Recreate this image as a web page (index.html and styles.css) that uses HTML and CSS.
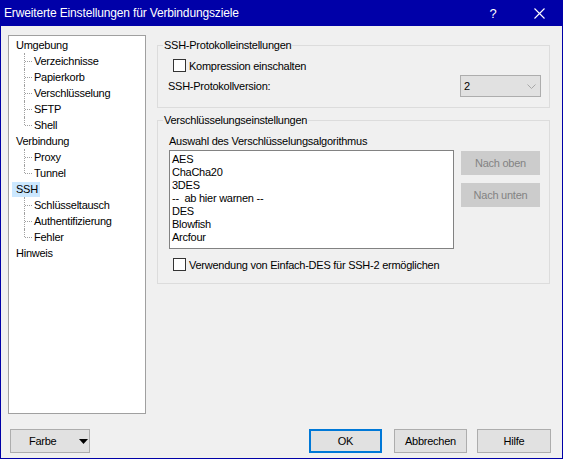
FILE: index.html
```html
<!DOCTYPE html>
<html lang="de">
<head>
<meta charset="utf-8">
<title>Erweiterte Einstellungen für Verbindungsziele</title>
<link rel="stylesheet" href="styles.css">
</head>
<body>
<div class="window">
  <div class="titlebar">
    <span class="title">Erweiterte Einstellungen für Verbindungsziele</span>
    <span class="help">?</span>
    <span class="close">
      <svg width="11" height="11" viewBox="0 0 11 11"><path d="M0.5 0.5 L10.5 10.5 M10.5 0.5 L0.5 10.5" stroke="#fff" stroke-width="1.1" fill="none"/></svg>
    </span>
  </div>
  <div class="main">
    <div class="tree">
      <div class="node">Umgebung</div>
      <div class="child">Verzeichnisse</div>
      <div class="child">Papierkorb</div>
      <div class="child">Verschlüsselung</div>
      <div class="child">SFTP</div>
      <div class="child last">Shell</div>
      <div class="node">Verbindung</div>
      <div class="child">Proxy</div>
      <div class="child last">Tunnel</div>
      <div class="node sel"><span class="label">SSH</span></div>
      <div class="child">Schlüsseltausch</div>
      <div class="child">Authentifizierung</div>
      <div class="child last">Fehler</div>
      <div class="node">Hinweis</div>
    </div>
    <div class="panel">
      <fieldset class="group group1">
        <legend>SSH-Protokolleinstellungen</legend>
        <div class="check-row r1"><span class="box"></span><span>Kompression einschalten</span></div>
        <div class="version-row">
          <span class="version-label">SSH-Protokollversion:</span>
          <div class="combo"><span>2</span>
            <svg width="9" height="5" viewBox="0 0 9 5"><path d="M0.5 0.5 L4.5 4.5 L8.5 0.5" stroke="#a8a8a8" stroke-width="1" fill="none"/></svg>
          </div>
        </div>
      </fieldset>
      <fieldset class="group group2">
        <legend>Verschlüsselungseinstellungen</legend>
        <div class="algo-label">Auswahl des Verschlüsselungsalgorithmus</div>
        <div class="algo-row">
          <div class="listbox">
            <div>AES</div>
            <div>ChaCha20</div>
            <div>3DES</div>
            <div>--&nbsp; ab hier warnen --</div>
            <div>DES</div>
            <div>Blowfish</div>
            <div>Arcfour</div>
          </div>
          <div class="side-buttons">
            <div class="btn disabled">Nach oben</div>
            <div class="btn disabled">Nach unten</div>
          </div>
        </div>
        <div class="check-row r2"><span class="box"></span><span>Verwendung von Einfach-DES für SSH-2 ermöglichen</span></div>
      </fieldset>
    </div>
  </div>
  <div class="footer">
    <div class="btn farbe"><span>Farbe</span>
      <svg width="9" height="5" viewBox="0 0 9 5"><path d="M0 0 L9 0 L4.5 5 Z" fill="#000"/></svg>
    </div>
    <div class="spacer"></div>
    <div class="btn ok">OK</div>
    <div class="btn cancel">Abbrechen</div>
    <div class="btn hilfe">Hilfe</div>
  </div>
</div>
</body>
</html>
```
FILE: styles.css
```css
html, body {
  margin: 0;
  padding: 0;
  background: #f0f0f0;
}
body {
  font-family: "Liberation Sans", Arial, sans-serif;
  font-size: 11px;
  letter-spacing: -0.25px;
  color: #000;
}
.window {
  width: 563px;
  height: 459px;
  box-sizing: border-box;
  border: 1px solid #0000a8;
  border-top: 0;
  background: #f0f0f0;
  display: flex;
  flex-direction: column;
}
.titlebar {
  height: 26px;
  background: #0000a8;
  color: #fff;
  display: flex;
  align-items: center;
  font-size: 12px;
  letter-spacing: -0.15px;
}
.title {
  padding-left: 3px;
  flex: 1;
}
.help {
  width: 16px;
  text-align: center;
  margin-right: 33px;
  font-size: 13px;
}
.close {
  display: flex;
  margin-right: 17px;
}
.main {
  display: flex;
  padding: 9px 0 0 7px;
  gap: 11px;
}
.tree {
  width: 138px;
  height: 379px;
  box-sizing: border-box;
  border: 1px solid #a0a0a0;
  background: #fff;
  padding-top: 1px;
}
.node {
  height: 16px;
  line-height: 16px;
  padding-left: 7px;
  white-space: nowrap;
}
.node.sel {
  padding-left: 3px;
}
.node.sel .label {
  display: inline-block;
  background: #cce8ff;
  padding: 0 2px 0 4px;
  height: 15px;
  line-height: 15px;
  vertical-align: top;
  margin-top: 1px;
}
.child {
  position: relative;
  height: 16px;
  line-height: 16px;
  padding-left: 25px;
  white-space: nowrap;
}
.child::before {
  content: "";
  position: absolute;
  left: 15px;
  top: 0;
  bottom: 0;
  border-left: 1px dotted #a0a0a0;
}
.child.last::before {
  bottom: 8px;
}
.child::after {
  content: "";
  position: absolute;
  left: 16px;
  top: 8px;
  width: 7px;
  border-top: 1px dotted #a0a0a0;
}
.panel {
  width: 393px;
  margin-top: 3px;
  display: flex;
  flex-direction: column;
}
.group {
  margin: 0;
  padding: 0;
  border: 1px solid #dcdcdc;
  min-width: 0;
}
.group legend {
  margin-left: 5px;
  padding: 0 1px;
  line-height: 14px;
  height: 14px;
}
.group1 {
  padding-bottom: 10px;
}
.group2 {
  margin-top: 5px;
  padding-bottom: 12px;
}
.check-row {
  display: flex;
  align-items: center;
  height: 13px;
  padding-left: 15px;
  gap: 3px;
}
.check-row.r1 {
  margin-top: 7px;
}
.check-row.r2 {
  margin-top: 9px;
}
.box {
  width: 11px;
  height: 11px;
  border: 1px solid #333;
  background: #fff;
  flex: none;
}
.version-row {
  display: flex;
  align-items: center;
  justify-content: space-between;
  margin-top: 3px;
  padding: 0 8px 0 10px;
}
.combo {
  width: 81px;
  height: 22px;
  box-sizing: border-box;
  border: 1px solid #adadad;
  background: #e1e1e1;
  display: flex;
  align-items: center;
  justify-content: space-between;
  padding: 0 4px 0 3px;
}
.algo-label {
  margin-top: 7px;
  padding-left: 11px;
  line-height: 14px;
}
.algo-row {
  display: flex;
  margin-top: 2px;
  padding: 0 9px 0 11px;
  gap: 7px;
  align-items: flex-start;
}
.listbox {
  width: 285px;
  height: 99px;
  box-sizing: border-box;
  border: 1px solid #828282;
  background: #fff;
  padding: 2px 2px 0;
  line-height: 13px;
}
.side-buttons {
  display: flex;
  flex-direction: column;
  gap: 8px;
  margin-top: 1px;
}
.btn {
  box-sizing: border-box;
  height: 24px;
  border: 1px solid #adadad;
  background: #e1e1e1;
  display: flex;
  align-items: center;
  justify-content: center;
}
.btn.disabled {
  width: 79px;
  background: #cccccc;
  border-color: #cccccc;
  color: #838383;
}
.footer {
  display: flex;
  margin-top: 15px;
  padding: 0 11px 0 9px;
}
.spacer {
  flex: 1;
}
.farbe {
  width: 80px;
  justify-content: flex-start;
  padding-left: 18px;
  gap: 22px;
}
.ok {
  width: 73px;
  border: 2px solid #0078d7;
}
.cancel {
  width: 73px;
  margin-left: 12px;
}
.hilfe {
  width: 74px;
  margin-left: 10px;
}
```
